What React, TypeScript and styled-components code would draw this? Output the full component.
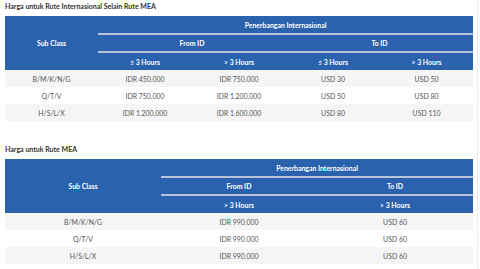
import { createGlobalStyle } from "styled-components";
import styled from "styled-components";

const GlobalStyle = createGlobalStyle`
  html, body {
    margin: 0;
    padding: 0;
    background: #ffffff;
  }
  body {
    font-family: Lato, "Liberation Sans", Arial, sans-serif;
  }
`;

const Page = styled.main`
  width: 478px;
  min-height: 269px;
  box-sizing: border-box;
  padding: 2px 0 0 5px;
  border-right: 1px solid #ececec;
`;

const Section = styled.section<{ gap: number }>`
  margin-top: ${(p) => p.gap}px;
`;

const Title = styled.h3`
  margin: 0 0 6px;
  font-size: 7px;
  line-height: 8px;
  font-weight: 700;
  color: #333333;
`;

const Table = styled.table`
  width: 468px;
  table-layout: fixed;
  border-collapse: collapse;
  font-size: 6.9px;
`;

const HeadRow = styled.tr`
  height: 18px;
`;

const HeadCell = styled.th<{ divider?: boolean }>`
  padding: 0;
  background: #2a62ae;
  color: #ffffff;
  font-weight: 700;
  text-align: center;
  vertical-align: middle;
  border-top: ${(p) => (p.divider ? "2px solid #b7c4d8" : "none")};
`;

const BodyRow = styled.tr<{ shade: boolean }>`
  height: 17px;
  background: ${(p) => (p.shade ? "#f5f5f5" : "#ffffff")};
  & + & td {
    border-top: 1px solid #e6e6e6;
  }
`;

const Cell = styled.td`
  padding: 0;
  color: #555555;
  text-align: center;
  vertical-align: middle;
`;

const intlRows = [
  ["B/M/K/N/G", "IDR 450.000", "IDR 750.000", "USD 30", "USD 50"],
  ["Q/T/V", "IDR 750.000", "IDR 1.200.000", "USD 50", "USD 80"],
  ["H/S/L/X", "IDR 1.200.000", "IDR 1.600.000", "USD 80", "USD 110"],
];

const meaRows = [
  ["B/M/K/N/G", "IDR 990.000", "USD 60"],
  ["Q/T/V", "IDR 990.000", "USD 60"],
  ["H/S/L/X", "IDR 990.000", "USD 60"],
];

const Body = ({ rows }: { rows: string[][] }) => (
  <tbody>
    {rows.map((r, i) => (
      <BodyRow key={i} shade={i % 2 === 0}>
        {r.map((v, j) => (
          <Cell key={j}>{v}</Cell>
        ))}
      </BodyRow>
    ))}
  </tbody>
);

export default function App() {
  return (
    <Page>
      <GlobalStyle />
      <Section gap={0}>
        <Title>Harga untuk Rute Internasional Selain Rute MEA</Title>
        <Table>
          <colgroup>
            <col style={{ width: 93 }} />
            <col style={{ width: 94 }} />
            <col style={{ width: 94 }} />
            <col style={{ width: 94 }} />
            <col style={{ width: 93 }} />
          </colgroup>
          <thead>
            <HeadRow>
              <HeadCell rowSpan={3}>Sub Class</HeadCell>
              <HeadCell colSpan={4}>Penerbangan Internasional</HeadCell>
            </HeadRow>
            <HeadRow>
              <HeadCell colSpan={2} divider>
                From ID
              </HeadCell>
              <HeadCell colSpan={2} divider>
                To ID
              </HeadCell>
            </HeadRow>
            <HeadRow>
              <HeadCell divider>≤ 3 Hours</HeadCell>
              <HeadCell divider>&gt; 3 Hours</HeadCell>
              <HeadCell divider>≤ 3 Hours</HeadCell>
              <HeadCell divider>&gt; 3 Hours</HeadCell>
            </HeadRow>
          </thead>
          <Body rows={intlRows} />
        </Table>
      </Section>
      <Section gap={24}>
        <Title>Harga untuk Rute MEA</Title>
        <Table>
          <colgroup>
            <col style={{ width: 156 }} />
            <col style={{ width: 156 }} />
            <col style={{ width: 156 }} />
          </colgroup>
          <thead>
            <HeadRow>
              <HeadCell rowSpan={3}>Sub Class</HeadCell>
              <HeadCell colSpan={2}>Penerbangan Internasional</HeadCell>
            </HeadRow>
            <HeadRow>
              <HeadCell divider>From ID</HeadCell>
              <HeadCell divider>To ID</HeadCell>
            </HeadRow>
            <HeadRow>
              <HeadCell divider>&gt; 3 Hours</HeadCell>
              <HeadCell divider>&gt; 3 Hours</HeadCell>
            </HeadRow>
          </thead>
          <Body rows={meaRows} />
        </Table>
      </Section>
    </Page>
  );
}
